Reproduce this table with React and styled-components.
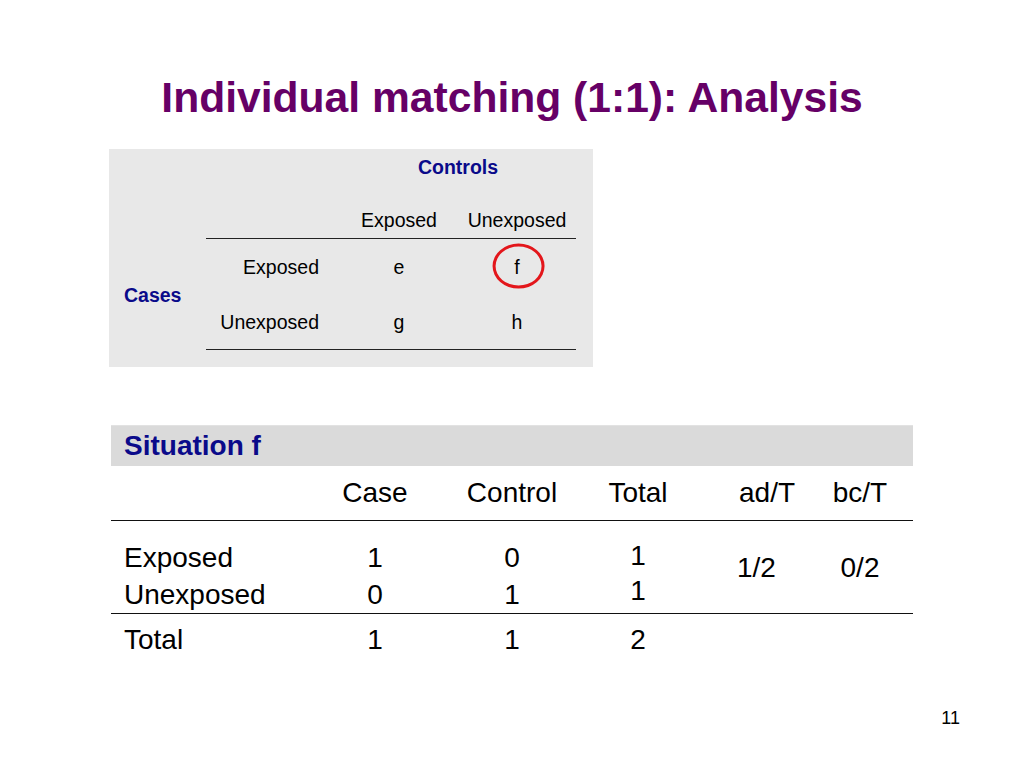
import styled, { createGlobalStyle } from 'styled-components';

const GlobalStyle = createGlobalStyle`
  html, body {
    margin: 0;
    padding: 0;
    background: #ffffff;
  }
  body {
    font-family: "Liberation Sans", Arial, sans-serif;
    color: #000;
  }
`;

const Slide = styled.div`
  width: 1024px;
  height: 768px;
  box-sizing: border-box;
  padding: 76px 0 40px 109px;
  display: flex;
  flex-direction: column;
  align-items: flex-start;
`;

const Title = styled.h1`
  margin: 0 0 0 -109px;
  width: 1024px;
  text-align: center;
  font-size: 42.6px;
  line-height: 43px;
  font-weight: bold;
  color: #660066;
`;

const CrossTab = styled.div`
  margin-top: 30px;
  width: 484px;
  box-sizing: border-box;
  padding-bottom: 17px;
  background: #e8e8e8;
  display: grid;
  grid-template-columns: 97px 124px 138px 108px 17px;
  grid-template-rows: 36px 54px 56px 55px;
  font-size: 19.5px;
  line-height: 24px;
`;

const ControlsHead = styled.div`
  grid-column: 3 / 5;
  grid-row: 1;
  align-self: center;
  text-align: center;
  padding-left: 10px;
  font-weight: bold;
  color: #0a0a8a;
`;

const CasesHead = styled.div`
  grid-column: 1;
  grid-row: 3 / 5;
  align-self: center;
  padding-left: 15px;
  font-weight: bold;
  color: #0a0a8a;
`;

const Cell = styled.div`
  grid-row: ${p => p.$row};
  grid-column: ${p => p.$col};
  display: flex;
  align-items: ${p => (p.$bottom ? 'flex-end' : 'center')};
  justify-content: ${p => (p.$right ? 'flex-end' : 'center')};
  box-sizing: border-box;
  padding-right: ${p => (p.$right ? '11px' : p.$col === 4 ? '10px' : '0')};
  padding-bottom: ${p => (p.$bottom ? '6px' : '0')};
  border-bottom: ${p => (p.$rule ? '1px solid #222' : 'none')};
  white-space: nowrap;
`;

const Circled = styled.span`
  position: relative;
  display: inline-block;
  &::after {
    content: '';
    position: absolute;
    left: 50%;
    top: 50%;
    width: 46px;
    height: 39px;
    transform: translate(-47%, -52%);
    border: 3.5px solid #e3161b;
    border-radius: 50%;
  }
`;

const Situation = styled.div`
  margin: 58px 0 0 2px;
  width: 802px;
  display: grid;
  grid-template-columns: 196px 136px 138px 114px 117px 96px 5px;
  font-size: 28px;
  line-height: 32px;
`;

const Band = styled.div`
  grid-column: 1 / -1;
  height: 41px;
  background: #dadada;
  border-top: 1px solid #e2e2e2;
  box-sizing: border-box;
  display: flex;
  align-items: center;
  padding-left: 13px;
  font-weight: bold;
  color: #0a0a8a;
`;

const Td = styled.div`
  grid-row: ${p => p.$row} / span ${p => p.$span || 1};
  grid-column: ${p => p.$col};
  height: ${p => p.$h}px;
  box-sizing: border-box;
  display: flex;
  align-items: ${p => (p.$top ? 'flex-start' : 'center')};
  justify-content: ${p => p.$align || 'center'};
  padding-left: ${p => p.$pl || 0}px;
  padding-top: ${p => p.$pt || 0}px;
  margin-top: ${p => p.$mt || 0}px;
  white-space: nowrap;
`;

const Rule = styled.div`
  grid-column: 1 / -1;
  height: 1px;
  background: #111;
`;

const PageNo = styled.div`
  margin-top: auto;
  align-self: flex-end;
  padding-right: 64px;
  font-size: 18px;
  line-height: 20px;
`;

const headers = ['Case', 'Control', 'Total', 'ad/T', 'bc/T'];

export default function App() {
  return (
    <>
      <GlobalStyle />
      <Slide>
        <Title>Individual matching (1:1): Analysis</Title>

        <CrossTab>
          <ControlsHead>Controls</ControlsHead>
          <CasesHead>Cases</CasesHead>

          <Cell $row={2} $col={2} $bottom $rule />
          <Cell $row={2} $col={3} $bottom $rule>Exposed</Cell>
          <Cell $row={2} $col={4} $bottom $rule>Unexposed</Cell>

          <Cell $row={3} $col={2} $right>Exposed</Cell>
          <Cell $row={3} $col={3}>e</Cell>
          <Cell $row={3} $col={4}><Circled>f</Circled></Cell>

          <Cell $row={4} $col={2} $right $rule>Unexposed</Cell>
          <Cell $row={4} $col={3} $rule>g</Cell>
          <Cell $row={4} $col={4} $rule>h</Cell>
        </CrossTab>

        <Situation>
          <Band>Situation f</Band>

          <Td $row={2} $col={1} $h={54} />
          {headers.map((h, i) => (
            <Td
              key={h}
              $row={2}
              $col={i + 2}
              $h={54}
              $align={h === 'ad/T' ? 'flex-start' : 'center'}
              $pl={h === 'ad/T' ? 44 : 0}
            >
              {h}
            </Td>
          ))}
          <Rule />

          <Td $row={4} $col={1} $h={37} $mt={18} $align="flex-start" $pl={13}>Exposed</Td>
          <Td $row={4} $col={2} $h={37} $mt={18}>1</Td>
          <Td $row={4} $col={3} $h={37} $mt={18}>0</Td>
          <Td $row={4} $col={4} $h={37} $mt={16}>1</Td>
          <Td $row={4} $col={5} $span={2} $h={74} $mt={18} $top $pt={13} $align="flex-start" $pl={42}>1/2</Td>
          <Td $row={4} $col={6} $span={2} $h={74} $mt={18} $top $pt={13}>0/2</Td>

          <Td $row={5} $col={1} $h={37} $align="flex-start" $pl={13}>Unexposed</Td>
          <Td $row={5} $col={2} $h={37}>0</Td>
          <Td $row={5} $col={3} $h={37}>1</Td>
          <Td $row={5} $col={4} $h={37} $mt={-4}>1</Td>
          <Rule />

          <Td $row={7} $col={1} $h={52} $align="flex-start" $pl={13}>Total</Td>
          <Td $row={7} $col={2} $h={52}>1</Td>
          <Td $row={7} $col={3} $h={52}>1</Td>
          <Td $row={7} $col={4} $h={52}>2</Td>
        </Situation>

        <PageNo>11</PageNo>
      </Slide>
    </>
  );
}
